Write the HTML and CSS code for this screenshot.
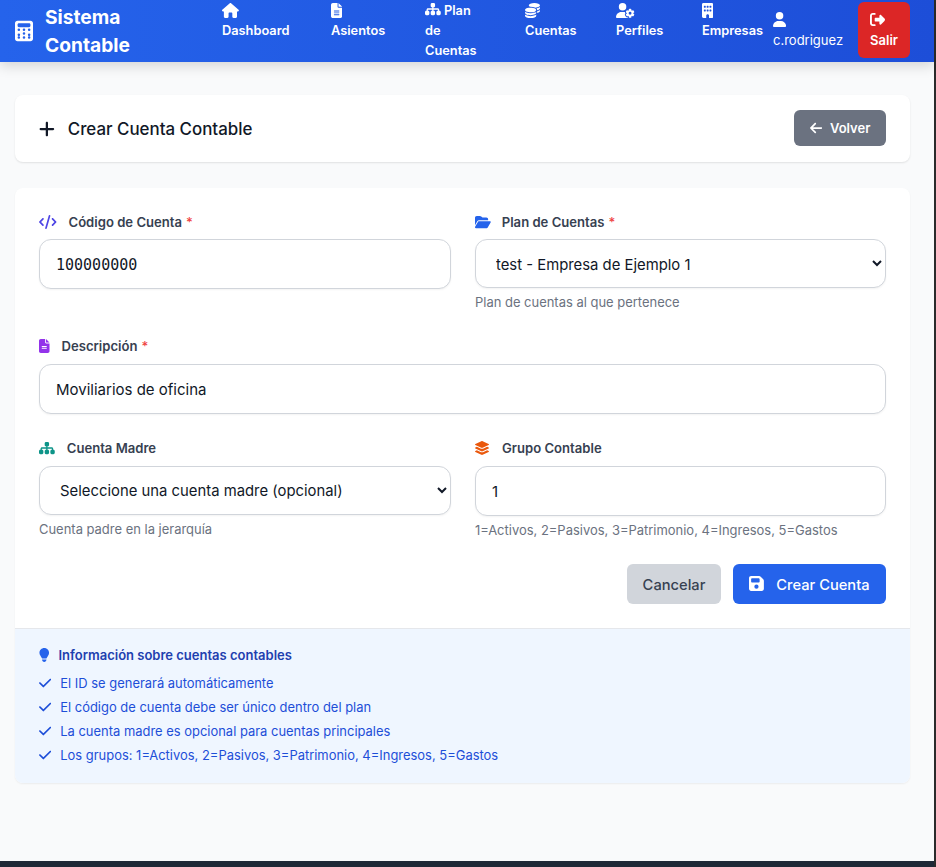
FILE: index.html
```html
<!DOCTYPE html>
<html lang="es">
<head>
    <meta charset="UTF-8">
    <meta name="viewport" content="width=device-width, initial-scale=1.0">
    <title>Crear Cuenta Contable</title>
    <link rel="stylesheet" href="styles.css">
</head>
<body>
    <div class="pagina">
        <nav class="barra">
            <a class="marca" href="#">
                <svg class="marca-icono" viewBox="0 0 448 512"><path fill="currentColor" d="M64 0C28.7 0 0 28.7 0 64V448c0 35.3 28.7 64 64 64H384c35.3 0 64-28.7 64-64V64c0-35.3-28.7-64-64-64H64zM96 64H352c17.7 0 32 14.3 32 32v32c0 17.7-14.3 32-32 32H96c-17.7 0-32-14.3-32-32V96c0-17.7 14.3-32 32-32zM128 224a32 32 0 1 1-64 0 32 32 0 1 1 64 0zm-32 96a32 32 0 1 1 0 64 32 32 0 1 1 0-64zm32 96a32 32 0 1 1-64 0 32 32 0 1 1 64 0zM224 256a32 32 0 1 1 0-64 32 32 0 1 1 0 64zm32 64a32 32 0 1 1-64 0 32 32 0 1 1 64 0zm-32 128a32 32 0 1 1 0-64 32 32 0 1 1 0 64zM384 224a32 32 0 1 1-64 0 32 32 0 1 1 64 0zm-32 96a32 32 0 1 1 0 64 32 32 0 1 1 0-64zm32 96a32 32 0 1 1-64 0 32 32 0 1 1 64 0z"/></svg>
                <span class="marca-texto">Sistema Contable</span>
            </a>
            <div class="enlaces">
                <a class="enlace" href="#">
                    <svg class="icono-nav" viewBox="0 0 576 512"><path fill="currentColor" d="M575.8 255.5c0 18-15 32.1-32 32.1h-32l.7 160.2c0 2.7-.2 5.4-.5 8.1V472c0 22.1-17.9 40-40 40H456c-1.100 0-2.200 0-3.300-.1-1.400.1-2.800.1-4.200.1H392c-22.100 0-40-17.900-40-40V360c0-17.700-14.300-32-32-32H256c-17.700 0-32 14.300-32 32v112c0 22.100-17.900 40-40 40H128c-1.500 0-3-.1-4.500-.2-1.200.1-2.400.2-3.600.2H104c-22.100 0-40-17.900-40-40V360c0-.9 0-1.900.1-2.800V287.600H32c-18 0-32-14-32-32.100 0-9 3-17 10-24L266.400 8c7-7 15-8 22-8s15 2 21 7L564.800 231.500c8 7 12 15 11 24z"/></svg>
                    Dashboard
                </a>
                <a class="enlace" href="#">
                    <svg class="icono-nav" viewBox="0 0 384 512"><path fill="currentColor" d="M64 0C28.700 0 0 28.700 0 64V448c0 35.300 28.700 64 64 64H320c35.300 0 64-28.700 64-64V160H256c-17.700 0-32-14.300-32-32V0H64zM256 0V128H384L256 0zM112 256H272c8.800 0 16 7.200 16 16s-7.200 16-16 16H112c-8.800 0-16-7.200-16-16s7.200-16 16-16zm0 64H272c8.800 0 16 7.200 16 16s-7.200 16-16 16H112c-8.800 0-16-7.200-16-16s7.200-16 16-16zm0 64H272c8.800 0 16 7.200 16 16s-7.200 16-16 16H112c-8.800 0-16-7.200-16-16s7.200-16 16-16z"/></svg>
                    Asientos
                </a>
                <a class="enlace enlace-plan" href="#">
                    <svg class="icono-linea" viewBox="0 0 576 512"><path fill="currentColor" d="M208 80c0-26.500 21.500-48 48-48h64c26.500 0 48 21.500 48 48v64c0 26.500-21.500 48-48 48h-8v40H464c30.900 0 56 25.100 56 56v32h8c26.500 0 48 21.500 48 48v64c0 26.500-21.500 48-48 48H464c-26.500 0-48-21.500-48-48V368c0-26.500 21.500-48 48-48h8V288c0-4.400-3.600-8-8-8H312v40h8c26.500 0 48 21.500 48 48v64c0 26.500-21.500 48-48 48H256c-26.500 0-48-21.500-48-48V368c0-26.500 21.500-48 48-48h8V280H112c-4.400 0-8 3.600-8 8v32h8c26.500 0 48 21.500 48 48v64c0 26.500-21.500 48-48 48H48c-26.500 0-48-21.500-48-48V368c0-26.500 21.500-48 48-48h8V288c0-30.900 25.100-56 56-56H264V192h-8c-26.500 0-48-21.500-48-48V80z"/></svg>
                    Plan de Cuentas
                </a>
                <a class="enlace" href="#">
                    <svg class="icono-nav" viewBox="0 0 512 512"><path fill="currentColor" d="M512 80c0 18-14.300 34.600-38.400 48c-29.100 16.100-72.500 27.500-122.300 30.900c-3.700-1.800-7.400-3.500-11.300-5C300.600 137.400 248.200 128 192 128c-8.300 0-16.400 .2-24.500 .6l-1.100-.6C142.300 114.600 128 98 128 80c0-44.200 86-80 192-80S512 35.800 512 80zM160.700 161.100c10.200-.7 20.700-1.100 31.300-1.100c62.200 0 117.400 12.300 152.500 31.400C369.300 204.900 384 221.700 384 240c0 4-.7 7.900-2.100 11.700c-4.600 13.200-17 25.300-35 35.500c0 0 0 0 0 0c-.1 .1-.3 .1-.4 .2l0 0 0 0c-.3 .2-.6 .3-.9 .5c-35 19.400-90.800 32-153.600 32c-59.600 0-112.900-11.300-148.200-29.100c-1.900-.9-3.700-1.900-5.500-2.900C14.300 274.600 0 258 0 240c0-34.800 53.400-64.500 128-75.400c10.500-1.500 21.400-2.700 32.700-3.500zM416 240c0-21.900-10.600-39.900-24.100-53.400c28.300-4.400 54.200-11.400 76.200-20.500c16.300-6.800 31.500-15.200 43.900-25.500V176c0 19.300-16.500 37.100-43.800 50.900c-14.600 7.400-32.400 13.700-52.400 18.500c.1-1.800 .2-3.500 .2-5.300zm-32 96c0 18-14.300 34.600-38.400 48c-1.800 1-3.600 1.900-5.500 2.900C304.900 404.700 251.600 416 192 416c-62.800 0-118.600-12.600-153.600-32C14.300 370.600 0 354 0 336V300.600c12.500 10.300 27.600 18.700 43.900 25.500C83.400 342.600 135.800 352 192 352s108.600-9.400 148.100-25.900c7.800-3.200 15.300-6.900 22.400-10.900c6.100-3.400 11.800-7.200 17.200-11.200c1.500-1.100 2.900-2.300 4.300-3.400V304v5.700V336zm32 0V304 278.100c19-4.200 36.500-9.500 52.100-16c16.300-6.800 31.500-15.200 43.900-25.500V272c0 10.500-5 21-14.900 30.900c-16.300 16.300-45 29.700-81.300 38.400c.1-1.700 .2-3.500 .2-5.300zM192 448c56.200 0 108.600-9.400 148.100-25.900c16.300-6.800 31.500-15.200 43.900-25.500V432c0 44.200-86 80-192 80S0 476.200 0 432V396.600c12.500 10.300 27.600 18.700 43.900 25.500C83.400 438.600 135.800 448 192 448z"/></svg>
                    Cuentas
                </a>
                <a class="enlace" href="#">
                    <svg class="icono-nav" viewBox="0 0 640 512"><path fill="currentColor" d="M224 0a128 128 0 1 1 0 256A128 128 0 1 1 224 0zM178.300 304h91.400c11.800 0 23.400 1.200 34.500 3.300c-2.100 18.500 7.400 35.600 21.800 44.800c-16.600 10.600-26.700 31.600-20 53.300c4 12.900 9.400 25.500 16.400 37.600s15.200 23.100 24.400 33c15.700 16.900 39.600 18.400 57.200 8.700v.9c0 9.200 2.700 18.500 7.900 26.300H29.700C13.300 512 0 498.700 0 482.300C0 383.800 79.800 304 178.300 304zM436 218.200c0-7 4.500-13.300 11.300-14.800c10.500-2.400 21.500-3.700 32.700-3.700s22.200 1.300 32.700 3.700c6.800 1.500 11.300 7.800 11.300 14.800v30.600c7.900 3.400 15.400 7.700 22.300 12.800l24.900-14.300c6.100-3.500 13.700-2.700 18.500 2.400c7.600 8.100 14.300 17.200 20.100 27.200s10.300 20.400 13.500 31c2.100 6.700-1.100 13.700-7.200 17.200l-25 14.400c.4 4 .7 8.100 .7 12.300s-.2 8.200-.7 12.300l25 14.400c6.100 3.500 9.200 10.500 7.200 17.200c-3.300 10.600-7.800 21-13.500 31s-12.500 19.100-20.100 27.200c-4.800 5.100-12.500 5.900-18.500 2.400l-24.900-14.300c-6.900 5.100-14.300 9.400-22.300 12.800l0 30.600c0 7-4.500 13.300-11.300 14.800c-10.500 2.400-21.500 3.700-32.700 3.700s-22.200-1.300-32.700-3.700c-6.800-1.500-11.300-7.800-11.300-14.800V454.800c-8-3.400-15.600-7.700-22.500-12.900l-24.700 14.300c-6.100 3.500-13.700 2.700-18.500-2.400c-7.600-8.100-14.300-17.200-20.100-27.200s-10.300-20.400-13.500-31c-2.100-6.700 1.100-13.700 7.200-17.200l24.800-14.300c-.4-4.100-.7-8.200-.7-12.400s.2-8.300 .7-12.400L343.800 325c-6.100-3.500-9.200-10.500-7.200-17.200c3.300-10.600 7.700-21 13.500-31s12.500-19.100 20.100-27.200c4.800-5.100 12.400-5.900 18.500-2.400l24.800 14.300c6.900-5.100 14.500-9.400 22.500-12.900V218.200zm92.100 133.500a48.100 48.100 0 1 0-96.100 0 48.100 48.100 0 1 0 96.100 0z"/></svg>
                    Perfiles
                </a>
                <a class="enlace" href="#">
                    <svg class="icono-nav" viewBox="0 0 384 512"><path fill="currentColor" d="M48 0C21.500 0 0 21.500 0 48V464c0 26.500 21.500 48 48 48h96V432c0-26.500 21.500-48 48-48s48 21.500 48 48v80h96c26.500 0 48-21.500 48-48V48c0-26.500-21.500-48-48-48H48zM64 240c0-8.800 7.200-16 16-16h32c8.800 0 16 7.200 16 16v32c0 8.800-7.200 16-16 16H80c-8.800 0-16-7.200-16-16V240zm112-16h32c8.800 0 16 7.200 16 16v32c0 8.800-7.200 16-16 16H176c-8.800 0-16-7.200-16-16V240c0-8.800 7.200-16 16-16zm80 16c0-8.800 7.200-16 16-16h32c8.800 0 16 7.200 16 16v32c0 8.800-7.200 16-16 16H272c-8.800 0-16-7.200-16-16V240zM80 96h32c8.800 0 16 7.200 16 16v32c0 8.800-7.200 16-16 16H80c-8.800 0-16-7.200-16-16V112c0-8.800 7.200-16 16-16zm80 16c0-8.800 7.200-16 16-16h32c8.800 0 16 7.200 16 16v32c0 8.800-7.200 16-16 16H176c-8.800 0-16-7.200-16-16V112zM272 96h32c8.800 0 16 7.200 16 16v32c0 8.800-7.200 16-16 16H272c-8.800 0-16-7.200-16-16V112c0-8.800 7.200-16 16-16z"/></svg>
                    Empresas
                </a>
            </div>
            <div class="usuario">
                <svg class="icono-nav" viewBox="0 0 448 512"><path fill="currentColor" d="M224 256A128 128 0 1 0 224 0a128 128 0 1 0 0 256zm-45.700 48C79.800 304 0 383.800 0 482.300C0 498.700 13.300 512 29.700 512H418.300c16.400 0 29.700-13.300 29.700-29.700C448 383.800 368.200 304 269.700 304H178.300z"/></svg>
                c.rodriguez
            </div>
            <a class="salir" href="#">
                <svg class="icono-nav" viewBox="0 0 512 512"><path fill="currentColor" d="M502.600 278.600c12.500-12.500 12.500-32.800 0-45.300l-128-128c-9.200-9.200-22.900-11.900-34.900-6.900s-19.800 16.600-19.800 29.600l0 72H192c-17.700 0-32 14.300-32 32v64c0 17.700 14.300 32 32 32h128v72c0 12.900 7.800 24.600 19.800 29.600s25.700 2.200 34.900-6.900l128-128zM160 96c17.700 0 32-14.300 32-32s-14.300-32-32-32H96C43 32 0 75 0 128V384c0 53 43 96 96 96h64c17.700 0 32-14.300 32-32s-14.300-32-32-32H96c-17.700 0-32-14.300-32-32V128c0-17.700 14.300-32 32-32h64z"/></svg>
                Salir
            </a>
        </nav>

        <main class="contenido">
            <section class="cabecera">
                <h1 class="titulo">
                    <svg class="titulo-icono" viewBox="0 0 448 512"><path fill="currentColor" d="M256 80c0-17.700-14.300-32-32-32s-32 14.300-32 32V224H48c-17.700 0-32 14.300-32 32s14.300 32 32 32H192V432c0 17.700 14.300 32 32 32s32-14.300 32-32V288H400c17.700 0 32-14.300 32-32s-14.300-32-32-32H256V80z"/></svg>
                    Crear Cuenta Contable
                </h1>
                <a class="btn-volver" href="#">
                    <svg class="icono-volver" viewBox="0 0 448 512"><path fill="currentColor" d="M9.400 233.400c-12.500 12.500-12.500 32.800 0 45.300l160 160c12.500 12.500 32.800 12.500 45.300 0s12.500-32.800 0-45.300L109.200 288H416c17.700 0 32-14.300 32-32s-14.300-32-32-32H109.300L214.600 118.600c12.500-12.500 12.500-32.800 0-45.300s-32.800-12.500-45.300 0l-160 160z"/></svg>
                    Volver
                </a>
            </section>

            <section class="tarjeta">
                <form class="formulario">
                    <div class="campo">
                        <label class="etiqueta">
                            <svg class="icono-campo azul-indigo" viewBox="0 0 640 512"><path fill="currentColor" d="M392.800 1.200c-17-4.900-34.700 5-39.600 22l-128 448c-4.900 17 5 34.700 22 39.600s34.700-5 39.600-22l128-448c4.900-17-5-34.700-22-39.600zm80.600 120.100c-12.500 12.500-12.500 32.800 0 45.300L562.700 256l-89.400 89.400c-12.500 12.500-12.500 32.800 0 45.300s32.800 12.500 45.300 0l112-112c12.500-12.500 12.500-32.800 0-45.300l-112-112c-12.500-12.500-32.800-12.500-45.300 0zm-306.700 0c-12.500-12.500-32.800-12.500-45.300 0l-112 112c-12.500 12.500-12.500 32.800 0 45.300l112 112c12.500 12.500 32.800 12.500 45.300 0s12.500-32.800 0-45.300L77.300 256l89.400-89.400c12.500-12.500 12.500-32.800 0-45.300z"/></svg>
                            Código de Cuenta <span class="requerido">*</span>
                        </label>
                        <input class="control control-codigo" type="text" value="100000000">
                    </div>
                    <div class="campo">
                        <label class="etiqueta">
                            <svg class="icono-campo azul" viewBox="0 0 576 512"><path fill="currentColor" d="M88.700 223.800L0 375.800V96C0 60.700 28.700 32 64 32H181.500c17 0 33.300 6.700 45.300 18.700l26.500 26.500c12 12 28.300 18.700 45.300 18.700H416c35.300 0 64 28.700 64 64v32H144c-22.800 0-43.800 12.100-55.300 31.800zm27.600 16.100C122.100 230 132.600 224 144 224H544c11.500 0 22 6.100 27.700 16.100s5.700 22.200-.1 32.100l-112 192C453.900 474 443.400 480 432 480H32c-11.500 0-22-6.100-27.700-16.100s-5.700-22.200 .1-32.100l112-192z"/></svg>
                            Plan de Cuentas <span class="requerido">*</span>
                        </label>
                        <select class="control control-select">
                            <option>test - Empresa de Ejemplo 1</option>
                        </select>
                        <p class="ayuda">Plan de cuentas al que pertenece</p>
                    </div>
                    <div class="campo campo-ancho">
                        <label class="etiqueta">
                            <svg class="icono-campo morado" viewBox="0 0 384 512"><path fill="currentColor" d="M64 0C28.700 0 0 28.700 0 64V448c0 35.300 28.700 64 64 64H320c35.300 0 64-28.700 64-64V160H256c-17.700 0-32-14.300-32-32V0H64zM256 0V128H384L256 0zM112 256H272c8.800 0 16 7.200 16 16s-7.200 16-16 16H112c-8.800 0-16-7.200-16-16s7.200-16 16-16zm0 64H272c8.800 0 16 7.200 16 16s-7.200 16-16 16H112c-8.800 0-16-7.200-16-16s7.200-16 16-16z"/></svg>
                            Descripción <span class="requerido">*</span>
                        </label>
                        <input class="control" type="text" value="Moviliarios de oficina">
                    </div>
                    <div class="campo">
                        <label class="etiqueta">
                            <svg class="icono-campo verde" viewBox="0 0 576 512"><path fill="currentColor" d="M208 80c0-26.500 21.500-48 48-48h64c26.500 0 48 21.500 48 48v64c0 26.500-21.500 48-48 48h-8v40H464c30.900 0 56 25.100 56 56v32h8c26.500 0 48 21.500 48 48v64c0 26.500-21.500 48-48 48H464c-26.500 0-48-21.500-48-48V368c0-26.500 21.500-48 48-48h8V288c0-4.400-3.600-8-8-8H312v40h8c26.500 0 48 21.500 48 48v64c0 26.500-21.500 48-48 48H256c-26.500 0-48-21.500-48-48V368c0-26.500 21.500-48 48-48h8V280H112c-4.400 0-8 3.600-8 8v32h8c26.500 0 48 21.500 48 48v64c0 26.500-21.500 48-48 48H48c-26.500 0-48-21.500-48-48V368c0-26.500 21.500-48 48-48h8V288c0-30.900 25.100-56 56-56H264V192h-8c-26.500 0-48-21.500-48-48V80z"/></svg>
                            Cuenta Madre
                        </label>
                        <select class="control control-select">
                            <option>Seleccione una cuenta madre (opcional)</option>
                        </select>
                        <p class="ayuda">Cuenta padre en la jerarquía</p>
                    </div>
                    <div class="campo">
                        <label class="etiqueta">
                            <svg class="icono-campo naranja" viewBox="0 0 512 512"><path fill="currentColor" d="M264.500 5.200c14.900-6.900 32.100-6.900 47 0l218.600 101c8.500 3.900 13.900 12.400 13.900 21.800s-5.400 17.900-13.900 21.800l-218.600 101c-14.900 6.900-32.100 6.900-47 0L45.900 149.800C37.400 145.800 32 137.300 32 128s5.400-17.900 13.900-21.800L264.500 5.200zM476.900 209.600l53.200 24.600c8.500 3.900 13.900 12.400 13.900 21.800s-5.400 17.900-13.900 21.800l-218.600 101c-14.900 6.900-32.100 6.900-47 0L45.900 277.800C37.400 273.800 32 265.300 32 256s5.400-17.900 13.900-21.800l53.200-24.600 152 70.200c23.400 10.800 50.400 10.800 73.800 0l152-70.200zm-152 198.200l152-70.200 53.200 24.600c8.500 3.900 13.900 12.400 13.900 21.800s-5.400 17.900-13.900 21.800l-218.600 101c-14.900 6.900-32.100 6.900-47 0L45.900 405.800C37.400 401.800 32 393.300 32 384s5.400-17.900 13.900-21.800l53.200-24.600 152 70.200c23.400 10.800 50.400 10.800 73.800 0z" transform="translate(-32 0)"/></svg>
                            Grupo Contable
                        </label>
                        <input class="control" type="text" value="1">
                        <p class="ayuda">1=Activos, 2=Pasivos, 3=Patrimonio, 4=Ingresos, 5=Gastos</p>
                    </div>
                    <div class="acciones">
                        <button class="btn btn-cancelar" type="button">Cancelar</button>
                        <button class="btn btn-crear" type="submit">
                            <svg class="icono-guardar" viewBox="0 0 448 512"><path fill="currentColor" d="M64 32C28.700 32 0 60.700 0 96V416c0 35.300 28.700 64 64 64H384c35.300 0 64-28.700 64-64V173.300c0-17-6.700-33.300-18.700-45.300L352 50.700C340 38.700 323.700 32 306.700 32H64zm0 96c0-17.700 14.300-32 32-32H288c17.700 0 32 14.300 32 32v64c0 17.700-14.300 32-32 32H96c-17.700 0-32-14.300-32-32V128zM224 288a64 64 0 1 1 0 128 64 64 0 1 1 0-128z"/></svg>
                            Crear Cuenta
                        </button>
                    </div>
                </form>
                <div class="info">
                    <h2 class="info-titulo">
                        <svg class="icono-foco" viewBox="0 0 384 512"><path fill="currentColor" d="M272 384c9.600-31.900 29.500-59.100 49.200-86.200c0 0 0 0 0 0c5.200-7.100 10.400-14.200 15.400-21.400c19.800-28.500 31.400-63 31.400-100.300C368 78.800 289.200 0 192 0S16 78.800 16 176c0 37.300 11.600 71.900 31.400 100.300c5 7.200 10.200 14.300 15.400 21.400c0 0 0 0 0 0c19.800 27.100 39.700 54.400 49.200 86.200H272zM192 512c44.200 0 80-35.800 80-80V416H112v16c0 44.200 35.800 80 80 80z"/></svg>
                        Información sobre cuentas contables
                    </h2>
                    <ul class="info-lista">
                        <li><svg class="icono-check" viewBox="0 0 448 512"><path fill="currentColor" d="M438.600 105.400c12.500 12.500 12.500 32.800 0 45.300l-256 256c-12.500 12.500-32.800 12.500-45.300 0l-128-128c-12.500-12.500-12.500-32.800 0-45.300s32.800-12.500 45.300 0L160 338.700 393.400 105.400c12.500-12.500 32.800-12.500 45.300 0z"/></svg>El ID se generará automáticamente</li>
                        <li><svg class="icono-check" viewBox="0 0 448 512"><path fill="currentColor" d="M438.600 105.400c12.500 12.500 12.500 32.800 0 45.300l-256 256c-12.500 12.500-32.800 12.500-45.300 0l-128-128c-12.500-12.500-12.500-32.800 0-45.300s32.800-12.500 45.300 0L160 338.700 393.400 105.400c12.500-12.500 32.800-12.500 45.300 0z"/></svg>El código de cuenta debe ser único dentro del plan</li>
                        <li><svg class="icono-check" viewBox="0 0 448 512"><path fill="currentColor" d="M438.600 105.400c12.500 12.500 12.500 32.800 0 45.300l-256 256c-12.500 12.500-32.800 12.500-45.300 0l-128-128c-12.500-12.500-12.500-32.800 0-45.300s32.800-12.500 45.300 0L160 338.700 393.400 105.400c12.500-12.500 32.800-12.500 45.300 0z"/></svg>La cuenta madre es opcional para cuentas principales</li>
                        <li><svg class="icono-check" viewBox="0 0 448 512"><path fill="currentColor" d="M438.600 105.400c12.500 12.500 12.500 32.800 0 45.300l-256 256c-12.500 12.500-32.800 12.500-45.300 0l-128-128c-12.500-12.500-12.500-32.800 0-45.300s32.800-12.500 45.300 0L160 338.700 393.400 105.400c12.500-12.500 32.800-12.500 45.300 0z"/></svg>Los grupos: 1=Activos, 2=Pasivos, 3=Patrimonio, 4=Ingresos, 5=Gastos</li>
                    </ul>
                </div>
            </section>
        </main>

        <footer class="pie"></footer>
    </div>
</body>
</html>
```

FILE: styles.css
```css
* {
    box-sizing: border-box;
}
html, body {
    margin: 0;
    height: 100%;
    overflow: hidden;
    background: #2b2b2b;
}
body {
    font-family: Inter, "Liberation Sans", sans-serif;
    color: #111827;
}
a {
    text-decoration: none;
    color: inherit;
}
.pagina {
    width: 934px;
    height: 867px;
    background: #f9fafb;
    display: flex;
    flex-direction: column;
}
.barra {
    height: 62px;
    flex: none;
    display: flex;
    align-items: center;
    padding: 0 0 2px 15px;
    color: white;
    background: linear-gradient(90deg, #2563eb, #1d4ed8);
    box-shadow: 0 4px 12px rgba(0, 0, 0, 0.15);
    position: relative;
}
.marca {
    width: 207px;
    margin-top: 2px;
    display: flex;
    align-items: center;
    gap: 12px;
    flex: none;
}
.marca-icono {
    width: 18px;
    height: 24px;
    flex: none;
}
.marca-texto {
    width: 100px;
    font-size: 19.2px;
    line-height: 28px;
    font-weight: 700;
}
.enlaces {
    display: grid;
    grid-template-columns: 69px 54px 60px 51px 46px 60px;
    column-gap: 40px;
    align-self: flex-start;
    padding-top: 1px;
    font-size: 12.8px;
    line-height: 20px;
    font-weight: 600;
}
.enlace {
    display: block;
    white-space: nowrap;
}
.enlace-plan {
    white-space: normal;
}
.icono-nav {
    display: block;
    width: auto;
    height: 15px;
    margin: 2px 0 3px;
}
.icono-linea {
    height: 14px;
    width: auto;
    vertical-align: -1px;
}
.usuario {
    margin-left: 11px;
    font-size: 13px;
    line-height: 20px;
}
.salir {
    margin-left: 15px;
    width: 52px;
    height: 56px;
    padding: 8px 12px;
    background: #dc2626;
    border-radius: 6px;
    font-size: 13px;
    line-height: 20px;
    font-weight: 600;
}
.contenido {
    flex: 1;
    padding: 33px 24px 0 15px;
    display: flex;
    flex-direction: column;
    gap: 25.6px;
}
.cabecera {
    height: 67px;
    background: white;
    border-radius: 8px;
    box-shadow: 0 1px 2px rgba(0, 0, 0, 0.1);
    display: flex;
    align-items: center;
    justify-content: space-between;
    padding: 0 24px 1px;
}
.titulo {
    margin: 0;
    padding-top: 2px;
    display: flex;
    align-items: center;
    gap: 13px;
    font-size: 16.9px;
    font-weight: 500;
}
.titulo-icono {
    height: 18px;
    width: auto;
}
.btn-volver {
    height: 36px;
    width: 92px;
    background: #6b7280;
    color: white;
    border-radius: 6px;
    display: flex;
    align-items: center;
    justify-content: center;
    gap: 8px;
    font-size: 13px;
    font-weight: 600;
}
.icono-volver {
    height: 14px;
    width: auto;
}
.tarjeta {
    background: white;
    border-radius: 8px;
    box-shadow: 0 1px 2px rgba(0, 0, 0, 0.06);
    overflow: hidden;
}
.formulario {
    display: grid;
    grid-template-columns: 412px 411px;
    gap: 24px;
    padding: 23.8px 24px 24px;
}
.campo-ancho,
.acciones {
    grid-column: 1 / -1;
}
.etiqueta {
    display: flex;
    align-items: center;
    padding-top: 0.3px;
    font-size: 13.1px;
    line-height: 20px;
    font-weight: 600;
    color: #374151;
    margin-bottom: 7.7px;
}
.etiqueta .requerido {
    color: #ef4444;
    margin-left: 4px;
    font-weight: 500;
}
.icono-campo {
    height: 14px;
    width: auto;
    margin-right: 12px;
}
.azul-indigo { color: #4f46e5; }
.azul { color: #2563eb; margin-right: 11px; }
.morado { color: #9333ea; }
.verde { color: #0d9488; }
.naranja { color: #ea580c; margin-right: 13px; }
.control {
    display: block;
    width: 100%;
    height: 50px;
    padding: 2px 16px 0;
    border: 1px solid #d1d5db;
    border-radius: 12px;
    background: white;
    font-family: inherit;
    font-size: 15px;
    color: #111827;
    box-shadow: 0 1px 2px rgba(0, 0, 0, 0.05);
}
.control-select {
    height: 49px;
    font-size: 14.85px;
}
.control-codigo {
    font-family: "DejaVu Sans Mono", monospace;
}
.ayuda {
    margin: 5px 0 0.5px;
    font-size: 12.96px;
    line-height: 18px;
    color: #6b7280;
}
.acciones {
    display: flex;
    justify-content: flex-end;
    gap: 12px;
    margin-top: 0.5px;
}
.btn {
    height: 40px;
    padding: 2px 0 0;
    border: none;
    border-radius: 6px;
    font-family: inherit;
    font-size: 14.7px;
    font-weight: 500;
    display: flex;
    align-items: center;
}
.btn-cancelar {
    width: 94px;
    justify-content: center;
    background: #d1d5db;
    color: #374151;
}
.btn-crear {
    width: 153px;
    justify-content: center;
    gap: 12px;
    background: #2563eb;
    color: white;
}
.icono-guardar {
    height: 17px;
    width: auto;
    margin-top: -2px;
}
.info {
    background: #eff6ff;
    border-top: 1px solid #e5e7eb;
    padding: 16px 24px;
    height: 155px;
}
.info-titulo {
    margin: 0;
    display: flex;
    align-items: center;
    gap: 9px;
    font-size: 13px;
    line-height: 20px;
    font-weight: 600;
    color: #1e40af;
}
.icono-foco {
    height: 14px;
    width: auto;
    color: #2563eb;
}
.info-lista {
    list-style: none;
    margin: 6.4px 0 0;
    padding: 0;
    font-size: 12.95px;
    line-height: 24px;
    color: #1d4ed8;
}
.info-lista li {
    display: flex;
    align-items: center;
}
.icono-check {
    height: 14px;
    width: auto;
    margin-right: 9px;
}
.pie {
    flex: none;
    height: 6px;
    background: #1f2937;
}
```
